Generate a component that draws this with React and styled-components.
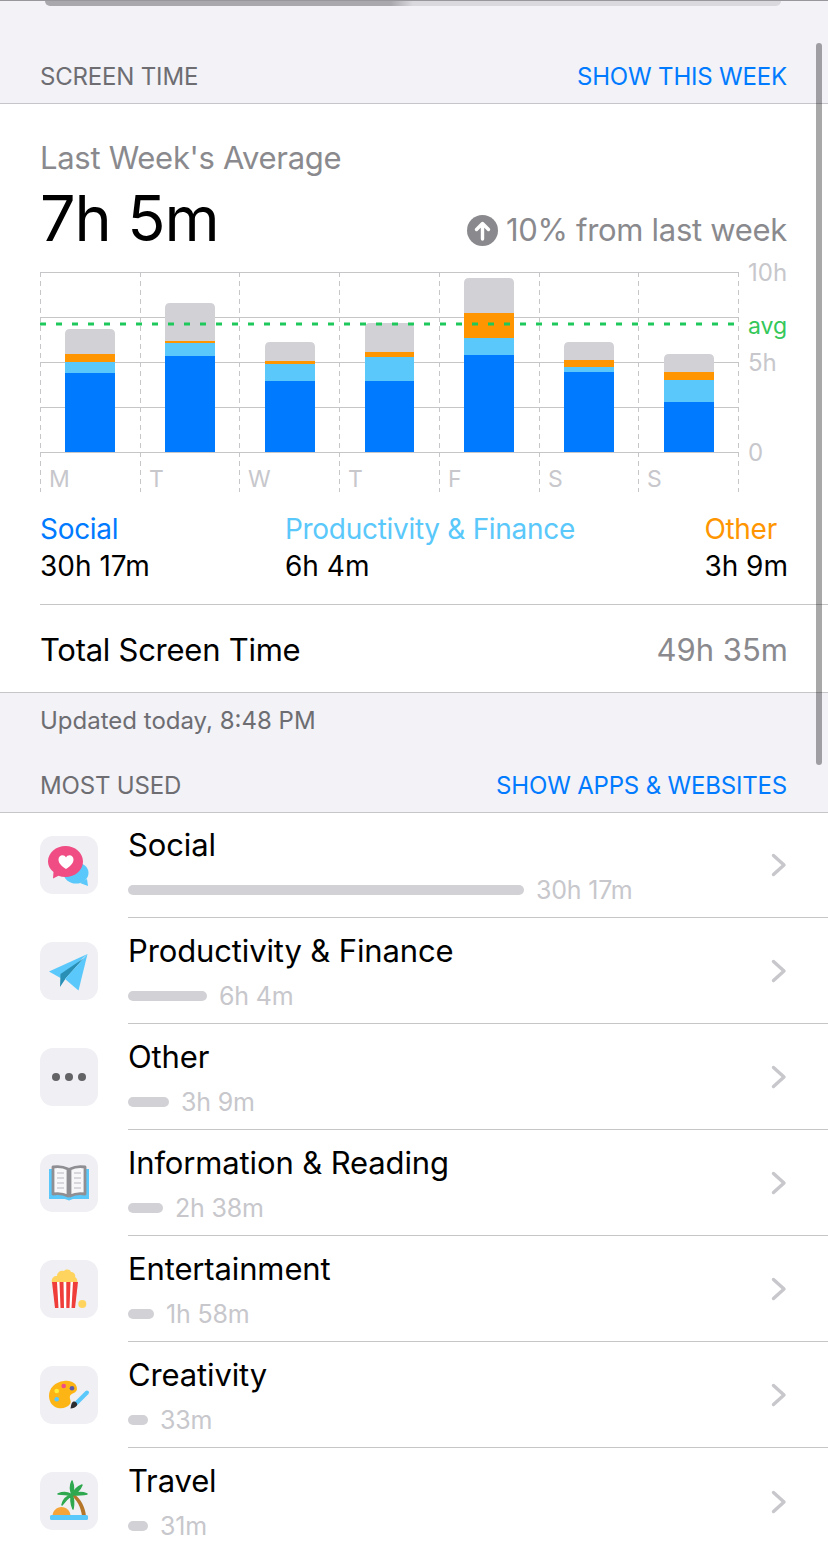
import React from "react";
import styled, { createGlobalStyle } from "styled-components";

const font = `Inter, "Liberation Sans", sans-serif`;

const days = [
  { label: "M", x: 65, w: 50, top: 329, orange: 354, light: 362, blue: 373 },
  { label: "T", x: 165, w: 50, top: 303, orange: 341, light: 343, blue: 356 },
  { label: "W", x: 265, w: 50, top: 342, orange: 361, light: 364, blue: 381 },
  { label: "T", x: 365, w: 49, top: 323, orange: 352, light: 357, blue: 381 },
  { label: "F", x: 464, w: 50, top: 278, orange: 313, light: 338, blue: 355 },
  { label: "S", x: 564, w: 50, top: 342, orange: 360, light: 367, blue: 372 },
  { label: "S", x: 664, w: 50, top: 354, orange: 372, light: 380, blue: 402 },
];

const dividers = [40, 140, 239, 339, 439, 539, 638, 738];
const gridLines = [272, 317, 362, 407, 452];

const GlobalStyle = createGlobalStyle`
  html, body {
    margin: 0;
    padding: 0;
    background: #f2f2f7;
  }
  body {
    font-family: ${font};
    -webkit-font-smoothing: antialiased;
  }
`;

const Page = styled.div`
  position: relative;
  width: 828px;
  height: 1553px;
  overflow: hidden;
  background: #f2f2f7;
`;

const TopStrip = styled.div`
  height: 3px;
  padding: 0 47px 0 45px;
  border-top: 1px solid #98989c;
  box-sizing: border-box;
`;

const TopPill = styled.div`
  height: 5px;
  border-radius: 0 0 10px 10px;
  background: linear-gradient(90deg, #a9a9ad 0%, #a9a9ad 47%, #dadade 50%, #dadade 100%);
`;

const SectionHeader = styled.div`
  display: flex;
  align-items: flex-end;
  justify-content: space-between;
  height: ${(p) => p.$height}px;
  padding: 0 41px 11px 40px;
  box-sizing: border-box;
  border-bottom: 1px solid #c6c6c8;
  font-size: 24px;
  line-height: 30px;
  letter-spacing: -0.18px;
`;

const HeaderTitle = styled.span`
  color: #6d6d72;
`;

const HeaderLink = styled.span`
  color: #007aff;
`;

const Card = styled.section`
  background: #fff;
  border-bottom: 1px solid #c6c6c8;
`;

const Summary = styled.div`
  padding: 36px 41px 0 40px;
  height: 164px;
  box-sizing: border-box;
`;

const SummaryLabel = styled.div`
  font-size: 31px;
  line-height: 36px;
  letter-spacing: -0.3px;
  color: #8a8a8e;
`;

const SummaryRow = styled.div`
  display: flex;
  align-items: flex-end;
  justify-content: space-between;
  margin-top: 5px;
`;

const BigValue = styled.div`
  font-size: 63px;
  line-height: 74px;
  letter-spacing: -1.1px;
  color: #000;
`;

const Change = styled.div`
  display: flex;
  align-items: center;
  gap: 8px;
  font-size: 31px;
  line-height: 38px;
  letter-spacing: -0.3px;
  color: #8a8a8e;
  padding-bottom: 6px;
`;

const ChartSvg = styled.svg`
  display: block;
  width: 828px;
  height: 224px;
  overflow: visible;
  font-family: ${font};
`;

const Legend = styled.div`
  display: grid;
  grid-template-columns: 245px 1fr auto;
  padding: 19px 40px 0 40px;
  height: 112px;
  box-sizing: border-box;
`;

const LegendItem = styled.div`
  text-align: ${(p) => (p.$right ? "right" : "left")};
`;

const LegendName = styled.div`
  font-size: 28px;
  line-height: 36px;
  letter-spacing: -0.3px;
  color: ${(p) => p.$color};
  padding-right: ${(p) => (p.$right ? "9px" : "0")};
`;

const LegendValue = styled.div`
  font-size: 28px;
  line-height: 38px;
  color: #000;
`;

const TotalRow = styled.div`
  display: flex;
  align-items: center;
  justify-content: space-between;
  height: 88px;
  margin-left: 40px;
  padding: 2px 40px 0 0;
  box-sizing: border-box;
  border-top: 1px solid #c6c6c8;
`;

const TotalLabel = styled.span`
  font-size: 31px;
  letter-spacing: -0.26px;
  color: #000;
`;

const TotalValue = styled.span`
  font-size: 31px;
  color: #8a8a8e;
`;

const Footnote = styled.div`
  padding: 13px 41px 0 40px;
  font-size: 24px;
  line-height: 30px;
  color: #6d6d72;
`;

const RowList = styled.div`
  background: #fff;
`;

const Row = styled.div`
  display: flex;
  align-items: flex-start;
  height: 106px;
  padding-left: 40px;
  box-sizing: border-box;
`;

const IconTile = styled.div`
  flex: none;
  width: 58px;
  height: 58px;
  margin-top: 23px;
  border-radius: 13px;
  background: #efeff4;
`;

const TileArt = styled.svg`
  display: block;
  width: 58px;
  height: 58px;
`;

const RowBody = styled.div`
  display: flex;
  align-items: center;
  flex: 1;
  height: 105px;
  margin-left: 30px;
  padding-right: 41px;
  box-sizing: border-box;
  border-bottom: ${(p) => (p.$last ? "none" : "1px solid #c6c6c8")};
`;

const RowText = styled.div`
  flex: 1;
  padding-top: 13px;
  align-self: flex-start;
`;

const RowTitle = styled.div`
  font-size: 31px;
  line-height: 38px;
  letter-spacing: -0.13px;
  color: #000;
`;

const UsageLine = styled.div`
  display: flex;
  align-items: center;
  gap: 12px;
  margin-top: 11px;
`;

const UsageBar = styled.div`
  width: ${(p) => p.$width}px;
  height: 10px;
  border-radius: 5px;
  background: #d1d1d6;
`;

const UsageTime = styled.span`
  font-size: 25px;
  line-height: 30px;
  letter-spacing: -0.2px;
  color: #c7c7cc;
`;

const Chevron = styled.svg`
  flex: none;
  width: 16px;
  height: 24px;
`;

const ScrollThumb = styled.div`
  position: absolute;
  top: 43px;
  left: 816px;
  width: 6px;
  height: 722px;
  border-radius: 3px;
  background: rgba(0, 0, 0, 0.34);
`;

function ArrowBadge() {
  return (
    <svg width="31" height="31" viewBox="0 0 31 31">
      <circle cx="15.5" cy="15.5" r="15.5" fill="#8a8a8e" />
      <path d="M15.5 24V9M9.5 14.5l6-6 6 6" fill="none" stroke="#fff" strokeWidth="3.4" strokeLinecap="round" strokeLinejoin="round" />
    </svg>
  );
}

// y coordinates in the data are page rows, the svg starts at y=268
function WeekChart() {
  const oy = 268;
  const seg = (d, from, to, color) => (
    <rect x={d.x} y={from - oy} width={d.w} height={to - from} fill={color} />
  );
  return (
    <ChartSvg viewBox="0 0 828 224">
      {gridLines.map((y) => (
        <line key={y} x1="40" x2="739" y1={y - oy + 0.5} y2={y - oy + 0.5} stroke="#c6c6c8" strokeWidth="1" />
      ))}
      {dividers.map((x) => (
        <line key={x} x1={x + 0.5} x2={x + 0.5} y1="4" y2="224" stroke="#c6c6c8" strokeWidth="1" strokeDasharray="5 4" />
      ))}
      {days.map((d, i) => (
        <g key={i}>
          <path
            d={`M${d.x} ${d.orange - oy}V${d.top - oy + 5}q0-5 5-5H${d.x + d.w - 5}q5 0 5 5V${d.orange - oy}Z`}
            fill="#d1d1d6"
          />
          {seg(d, d.orange, d.light, "#ff9500")}
          {seg(d, d.light, d.blue, "#5ac8fa")}
          {seg(d, d.blue, 452, "#007aff")}
          <text x={dividers[i] + 9} y="219" fontSize="23" fill="#c7c7cc">{d.label}</text>
        </g>
      ))}
      <line x1="40" x2="739" y1={324 - oy} y2={324 - oy} stroke="#1fc85a" strokeWidth="3" strokeDasharray="6 10" />
      <text x="748" y="13" fontSize="24" fill="#c7c7cc">10h</text>
      <text x="748" y="66" fontSize="23" fill="#34c759">avg</text>
      <text x="748" y="103" fontSize="24" fill="#c7c7cc">5h</text>
      <text x="748" y="193" fontSize="24" fill="#c7c7cc">0</text>
    </ChartSvg>
  );
}

// Category icons share the tile's 58x58 coordinate space
function SocialIcon() {
  return (
    <TileArt viewBox="0 0 58 58">
      <ellipse cx="36" cy="37" rx="12.500" ry="10.500" fill="#5ac8fa" />
      <path d="M47 43l1 7-8-3z" fill="#5ac8fa" />
      <path d="M25.500 10c9.500 0 17.500 6.800 17.500 15.500S35 41 25.500 41c-2.500 0-4.800-.4-7-1.200L13 42.500l.5-6.500C10 33 8 29.500 8 25.500 8 16.800 16 10 25.500 10z" fill="#ef4d83" />
      <path d="M26 33c-5.500-3.500-7.500-6.500-7.500-9.500 0-2.500 1.800-4.200 4-4.200 1.500 0 2.800.8 3.500 2.200.7-1.400 2-2.200 3.500-2.200 2.200 0 4 1.700 4 4.200 0 3-2 6-7.500 9.500z" fill="#fff" />
    </TileArt>
  );
}

function PlaneIcon() {
  return (
    <TileArt viewBox="0 0 58 58">
      <path d="M9 29.500L47.500 12 20.500 36z" fill="#5ac8fa" />
      <path d="M20.500 32L44 16 26 36l-6 9z" fill="#2a8fb5" />
      <path d="M47.500 12L38.500 48.500 25 37z" fill="#5ac8fa" />
    </TileArt>
  );
}

function DotsIcon() {
  return (
    <TileArt viewBox="0 0 58 58">
      <circle cx="16" cy="29" r="4" fill="#636366" />
      <circle cx="29" cy="29" r="4" fill="#636366" />
      <circle cx="42" cy="29" r="4" fill="#636366" />
    </TileArt>
  );
}

function BookIcon() {
  return (
    <TileArt viewBox="0 0 58 58">
      <path d="M9 15h40v30H33l-4 1.500-4-1.500H9z" fill="#5ac8fa" />
      <path d="M28 15c-4-2-9-3-15-2v27c6-1 11 0 15 2zM30 15c4-2 9-3 15-2v27c-6-1-11 0-15 2z" fill="#f7f7f9" stroke="#8e8e93" strokeWidth="2.800" strokeLinejoin="round" />
      <path d="M17 19h7M17 24h7M17 29h7M17 34h7M34 19h7M34 24h7M34 29h7M34 34h7" stroke="#d8d8dc" strokeWidth="2" />
    </TileArt>
  );
}

function PopcornIcon() {
  return (
    <TileArt viewBox="0 0 58 58">
      <path d="M12 23c-1-4 1-7 5-7 0-4 4-6 7-5 2-2 6-2 7 1 3 0 5 3 4 5 2 1 3 4 2 6z" fill="#ffd45e" />
      <path d="M12 22h26l-3 26H15z" fill="#ef3d3a" />
      <path d="M17 22h2.500l1 26H18.500zM23.500 22h2.800v26h-2.300zM30.500 22h2.500l-1.500 26h-2z" fill="#fff" />
      <circle cx="42.300" cy="44" r="4" fill="#ffd45e" />
    </TileArt>
  );
}

function PaletteIcon() {
  return (
    <TileArt viewBox="0 0 58 58">
      <path d="M24 15c8-1 13 3 13 8 0 4-6 4-7 7-1 3 2 5 0 8-2 3-7 5-12 4-5-1-9-6-9-12C9 22 15 16 24 15z" fill="#fdb515" />
      <circle cx="23.700" cy="20" r="2.300" fill="#ef4d83" />
      <circle cx="32" cy="22.300" r="2.300" fill="#5e5ca8" />
      <circle cx="16.700" cy="25" r="2.300" fill="#ffec3d" />
      <circle cx="16.700" cy="33.300" r="2.300" fill="#5ac8fa" />
      <path d="M47 26.500L36.500 37" stroke="#5ac8fa" strokeWidth="4" strokeLinecap="round" />
      <path d="M33.500 35.500c2-.5 4.500 2 3.500 4-1.500 2-4 2.800-6.500 3 .8-2.500.5-6 3-7z" fill="#2c2c2e" />
    </TileArt>
  );
}

function PalmIcon() {
  return (
    <TileArt viewBox="0 0 58 58">
      <path d="M31 23c6 5 10 12 11 21h4c-1-9-5-17-12-22z" fill="#b5762a" />
      <path d="M32 23c-4-3-9-3-14-1 5 0 9 1 14 1zM32 23c-5 1-9 5-10 10 3-4 6-7 10-10zM32 23c-2 4-1 9 1 14 1-5 1-10-1-14zM32 23c-2-5-2-10 0-14 2 5 2 10 0 14zM32 23c2-5 5-8 10-10-2 5-5 8-10 10zM32 23c5-3 10-3 15-1-5 1-10 1-15 1z" fill="#2fa84f" stroke="#2fa84f" strokeWidth="1.500" strokeLinejoin="round" />
      <path d="M12.500 44c0-5 4-9 9-9s9 4 9 9z" fill="#f5a43a" />
      <rect x="10" y="43" width="38" height="5" rx="1.500" fill="#5ac8fa" />
    </TileArt>
  );
}

const categories = [
  { name: "Social", time: "30h 17m", bar: 396, Icon: SocialIcon },
  { name: "Productivity & Finance", time: "6h 4m", bar: 79, Icon: PlaneIcon },
  { name: "Other", time: "3h 9m", bar: 41, Icon: DotsIcon },
  { name: "Information & Reading", time: "2h 38m", bar: 35, Icon: BookIcon },
  { name: "Entertainment", time: "1h 58m", bar: 26, Icon: PopcornIcon },
  { name: "Creativity", time: "33m", bar: 20, Icon: PaletteIcon },
  { name: "Travel", time: "31m", bar: 20, Icon: PalmIcon },
];

export default function App() {
  return (
    <Page>
      <GlobalStyle />
      <TopStrip>
        <TopPill />
      </TopStrip>
      <SectionHeader $height={101}>
        <HeaderTitle>SCREEN TIME</HeaderTitle>
        <HeaderLink>SHOW THIS WEEK</HeaderLink>
      </SectionHeader>
      <Card>
        <Summary>
          <SummaryLabel>Last Week's Average</SummaryLabel>
          <SummaryRow>
            <BigValue>7h 5m</BigValue>
            <Change>
              <ArrowBadge />
              10% from last week
            </Change>
          </SummaryRow>
        </Summary>
        <WeekChart />
        <Legend>
          <LegendItem>
            <LegendName $color="#007aff">Social</LegendName>
            <LegendValue>30h 17m</LegendValue>
          </LegendItem>
          <LegendItem>
            <LegendName $color="#5ac8fa">Productivity &amp; Finance</LegendName>
            <LegendValue>6h 4m</LegendValue>
          </LegendItem>
          <LegendItem>
            <LegendName $color="#ff9500" $right>Other</LegendName>
            <LegendValue>3h 9m</LegendValue>
          </LegendItem>
        </Legend>
        <TotalRow>
          <TotalLabel>Total Screen Time</TotalLabel>
          <TotalValue>49h 35m</TotalValue>
        </TotalRow>
      </Card>
      <Footnote>Updated today, 8:48 PM</Footnote>
      <SectionHeader $height={77}>
        <HeaderTitle>MOST USED</HeaderTitle>
        <HeaderLink>SHOW APPS &amp; WEBSITES</HeaderLink>
      </SectionHeader>
      <RowList>
        {categories.map(({ name, time, bar, Icon }, i) => (
          <Row key={name}>
            <IconTile>
              <Icon />
            </IconTile>
            <RowBody $last={i === categories.length - 1}>
              <RowText>
                <RowTitle>{name}</RowTitle>
                <UsageLine>
                  <UsageBar $width={bar} />
                  <UsageTime>{time}</UsageTime>
                </UsageLine>
              </RowText>
              <Chevron viewBox="0 0 16 24">
                <path d="M2.500 2.500L13 12 2.500 21.500" fill="none" stroke="#c7c7cc" strokeWidth="3.400" strokeLinecap="round" strokeLinejoin="round" />
              </Chevron>
            </RowBody>
          </Row>
        ))}
      </RowList>
      <ScrollThumb />
    </Page>
  );
}
